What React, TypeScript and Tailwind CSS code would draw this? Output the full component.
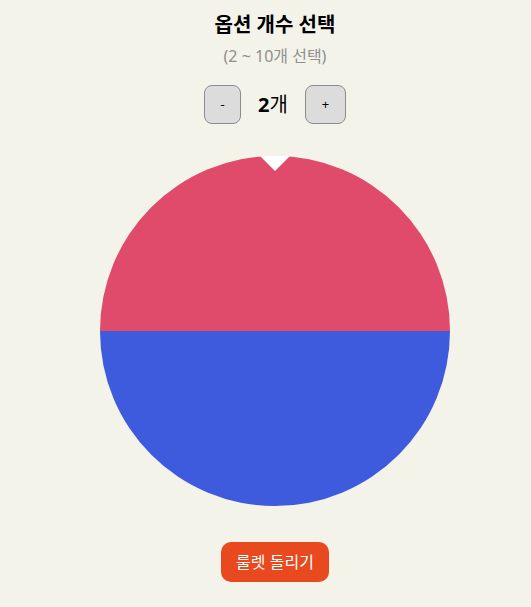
import React, { useState } from "react";

const COLORS = ["#e04a6b", "#3e5bdd", "#f0b429", "#2bb673", "#9b59b6", "#f07f3c", "#1abc9c", "#e84393", "#34495e", "#95a5a6"];

function Wheel({ count }: { count: number }) {
  const r = 175;
  const c = 175;
  const slices = Array.from({ length: count }, (_, i) => {
    const a0 = (i / count) * Math.PI * 2 - Math.PI;
    const a1 = ((i + 1) / count) * Math.PI * 2 - Math.PI;
    const x0 = c + r * Math.cos(a0);
    const y0 = c + r * Math.sin(a0);
    const x1 = c + r * Math.cos(a1);
    const y1 = c + r * Math.sin(a1);
    const large = a1 - a0 > Math.PI ? 1 : 0;
    return (
      <path
        key={i}
        d={`M${c},${c} L${x0},${y0} A${r},${r} 0 ${large} 1 ${x1},${y1} Z`}
        fill={COLORS[i % COLORS.length]}
      />
    );
  });
  return (
    <svg width="350" height="350" viewBox="0 0 350 350">
      {slices}
    </svg>
  );
}

export default function App() {
  const [count, setCount] = useState(2);
  return (
    <div
      className="min-h-[607px] bg-[#f4f3ea] w-[550px] flex flex-col items-center"
      style={{ fontFamily: '"Noto Sans", "Noto Sans CJK KR", sans-serif' }}
    >
      <h2 className="mt-[11px] text-[20px] leading-[28px] font-bold text-black">옵션 개수 선택</h2>
      <p className="mt-[5px] text-[16px] leading-[24px] text-[#8f8f8f]">(2 ~ 10개 선택)</p>
      <div className="mt-[17px] flex flex-row items-center gap-[17px]">
        <button
          onClick={() => setCount(Math.max(2, count - 1))}
          className="w-[37px] h-[39px] rounded-[8px] border border-[#8c8c8c] bg-[#dcdcdc] text-[13px] text-black"
        >
          -
        </button>
        <span className="text-[20px] leading-[30px] text-black">
          <b>{count}</b>개
        </span>
        <button
          onClick={() => setCount(Math.min(10, count + 1))}
          className="w-[41px] h-[39px] rounded-[8px] border border-[#8c8c8c] bg-[#dcdcdc] text-[13px] text-black"
        >
          +
        </button>
      </div>
      <div className="relative mt-[32px]">
        <Wheel count={count} />
        <div className="absolute left-1/2 -translate-x-1/2 top-0 w-0 h-0 border-l-[15px] border-r-[15px] border-t-[15px] border-l-transparent border-r-transparent border-t-white" />
      </div>
      <button className="mt-[36px] h-[40px] px-[15px] rounded-[10px] bg-[#e8491e] text-white text-[16px]">
        룰렛 돌리기
      </button>
    </div>
  );
}
